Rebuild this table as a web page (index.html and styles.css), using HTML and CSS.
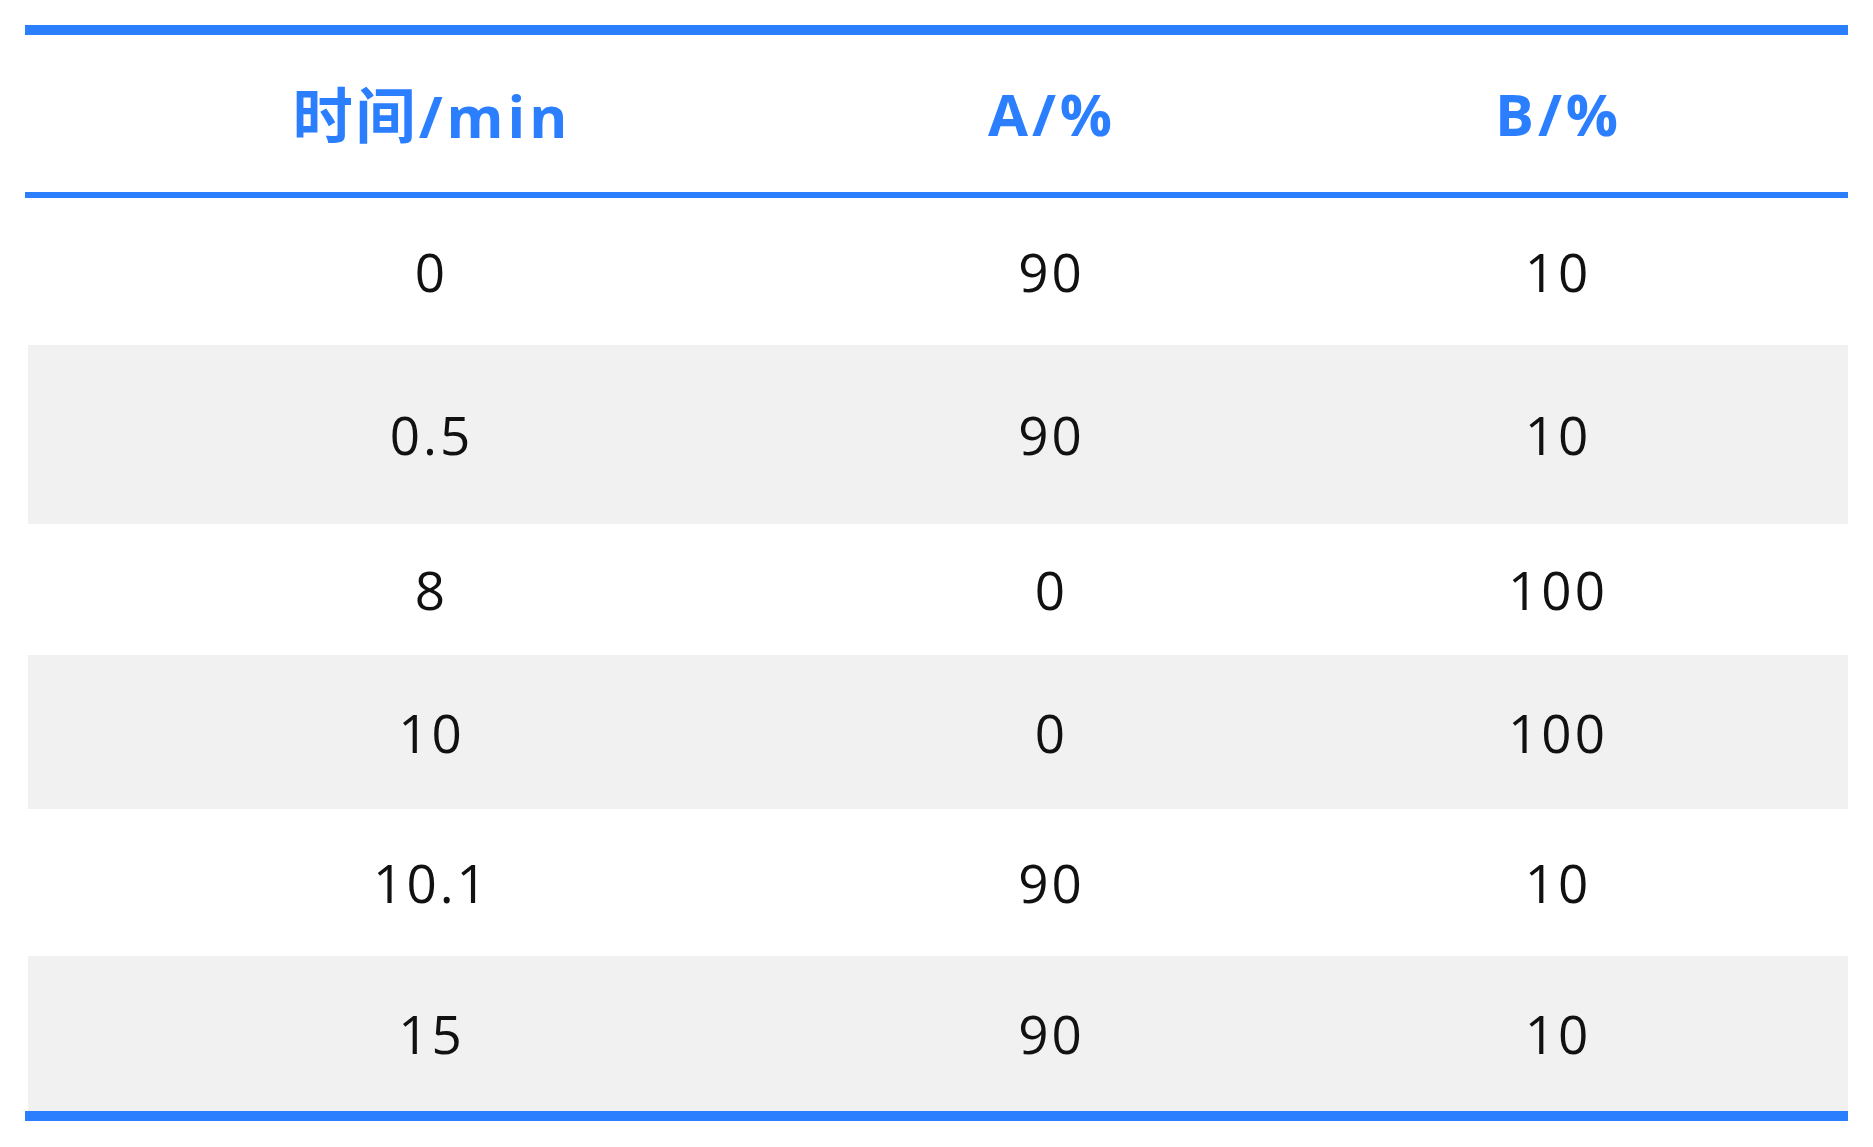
FILE: index.html
```html
<!DOCTYPE html>
<html lang="zh">
<head>
<meta charset="utf-8">
<title>梯度洗脱程序</title>
<link rel="stylesheet" href="styles.css">
</head>
<body>
<div class="table">
  <div class="head">
    <div class="cell"><span class="cjk">时间</span>/min</div>
    <div class="cell">A/%</div>
    <div class="cell">B/%</div>
  </div>
  <div class="body">
    <div class="row">
      <div class="cell">0</div><div class="cell">90</div><div class="cell">10</div>
    </div>
    <div class="row alt">
      <div class="cell">0.5</div><div class="cell">90</div><div class="cell">10</div>
    </div>
    <div class="row">
      <div class="cell">8</div><div class="cell">0</div><div class="cell">100</div>
    </div>
    <div class="row alt">
      <div class="cell">10</div><div class="cell">0</div><div class="cell">100</div>
    </div>
    <div class="row">
      <div class="cell">10.1</div><div class="cell">90</div><div class="cell">10</div>
    </div>
    <div class="row alt">
      <div class="cell">15</div><div class="cell">90</div><div class="cell">10</div>
    </div>
  </div>
</div>
</body>
</html>
```
FILE: styles.css
```css
html, body {
  margin: 0;
  padding: 0;
  background: #ffffff;
}

body {
  font-family: "Open Sans", "Noto Sans CJK SC", sans-serif;
}

.table {
  width: 1823px;
  margin: 25px 0 0 25px;
  border-top: 10px solid #2b7fff;
  border-bottom: 10px solid #2b7fff;
}

.head,
.row {
  display: grid;
  grid-template-columns: 810px 430px 1fr;
  align-items: center;
}

.cell {
  text-align: center;
  white-space: nowrap;
}

.head {
  height: 157px;
  border-bottom: 6px solid #2b7fff;
  color: #2b7fff;
  font-weight: 700;
  font-size: 58px;
  letter-spacing: 4px;
  line-height: 1;
}

.head .cell {
  padding-left: 4px;
}

.cjk {
  font-family: "Noto Sans CJK SC", sans-serif;
  font-size: 60px;
  letter-spacing: 3px;
}

.body {
  display: grid;
  grid-template-rows: 147px 179px 131px 154px 147px 155px;
}

.row {
  color: #111111;
  font-size: 53px;
  letter-spacing: 3px;
  line-height: 1;
}

.row .cell {
  padding-left: 3px;
}

.row.alt {
  background: linear-gradient(90deg, #ffffff 0 3px, #f1f1f1 3px);
}
```
